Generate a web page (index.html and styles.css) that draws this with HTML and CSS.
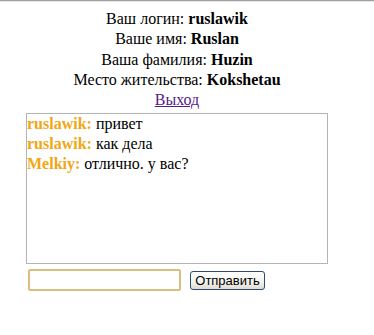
FILE: index.html
```html
<!DOCTYPE html>
<html>
<head>
<meta charset="utf-8">
<link rel="stylesheet" href="styles.css">
</head>
<body>
<div class="topline"></div>
<div class="page">
  <div class="info">
    <div class="row">Ваш логин: <b>ruslawik</b></div>
    <div class="row">Ваше имя: <b>Ruslan</b></div>
    <div class="row">Ваша фамилия: <b>Huzin</b></div>
    <div class="row">Место жительства: <b>Kokshetau</b></div>
    <div class="row"><a href="#" class="logout">Выход</a></div>
  </div>
  <div class="chat">
    <div class="msg"><b class="nick">ruslawik:</b> привет</div>
    <div class="msg"><b class="nick">ruslawik:</b> как дела</div>
    <div class="msg"><b class="nick">Melkiy:</b> отлично. у вас?</div>
  </div>
  <div class="form">
    <input type="text" class="field">
    <button class="send">Отправить</button>
  </div>
</div>
</body>
</html>
```
FILE: styles.css
```css
html, body {
  margin: 0;
  padding: 0;
  background: #fff;
}
body {
  font-family: "Liberation Serif", "Times New Roman", serif;
  font-size: 16px;
  color: #000;
}
.topline {
  height: 1px;
  background: #a0a0a0;
  border-bottom: 1px solid #e6e6e6;
}
.page {
  width: 354px;
}
.info {
  text-align: center;
  padding-top: 7px;
}
.row {
  line-height: 20.3px;
}
.logout {
  color: #551a8b;
}
.chat {
  margin: 3px 0 0 26px;
  width: 300px;
  height: 149px;
  border: 1px solid #b4b4b4;
  line-height: 20px;
  padding-top: 0;
}
.msg {
  padding-left: 0;
}
.nick {
  color: #f2a612;
}
.form {
  margin: 5px 0 0 28px;
  display: flex;
  align-items: center;
  gap: 9px;
}
.field {
  width: 149px;
  height: 18px;
  margin: 0;
  padding: 0;
  border: 2px solid #d8bf7e;
  border-radius: 2px;
  background: #fff;
}
.send {
  width: 75px;
  height: 19px;
  margin: 0;
  padding: 0;
  font-family: "Liberation Sans", Arial, sans-serif;
  font-size: 13px;
  color: #000;
  border: 1px solid #2f4a6e;
  border-radius: 3px;
  background: linear-gradient(#ffffff, #f2f2ee 60%, #dedbd0);
}
```
